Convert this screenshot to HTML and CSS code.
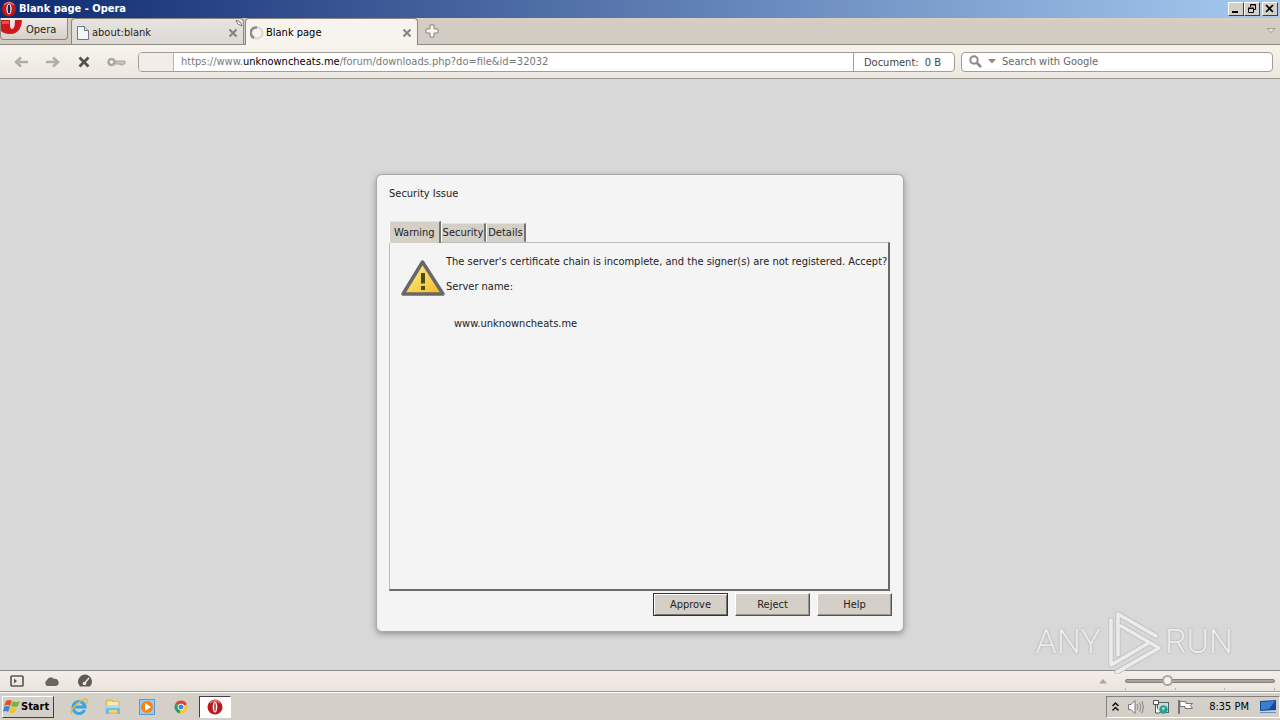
FILE: index.html
```html
<!DOCTYPE html>
<html lang="en">
<head>
<meta charset="utf-8">
<title>Blank page - Opera</title>
<link rel="stylesheet" href="styles.css">
</head>
<body>
<header class="titlebar">
  <svg class="title-icon" width="16" height="16" viewBox="0 0 16 16"><ellipse cx="8" cy="8" rx="7" ry="7.5" fill="#c51418"/><path d="M3 4Q8-1 13 4" fill="none" stroke="#f0746a" stroke-width="1.5"/><ellipse cx="8" cy="8" rx="2.6" ry="5.4" fill="#fff"/><ellipse cx="8" cy="8" rx="1.4" ry="4.5" fill="#17265c"/></svg>
  <h1 class="title">Blank page - Opera</h1>
  <div class="window-buttons">
    <button class="win-btn" aria-label="Minimize"><svg width="12" height="10" viewBox="0 0 12 10"><path d="M2 7h6v2H2z"/></svg></button>
    <button class="win-btn" aria-label="Restore"><svg width="12" height="10" viewBox="0 0 12 10" fill="none" stroke="#000"><path d="M4.500 3V.5h5v5H7.500M4 1h6M2.500 4.500h5v4h-5zM2 4h6"/></svg></button>
    <button class="win-btn win-close" aria-label="Close"><svg width="12" height="10" viewBox="0 0 12 10"><path d="M2 1l7 7M9 1L2 8" stroke="#000" stroke-width="1.7"/></svg></button>
  </div>
</header>

<nav class="tabbar">
  <button class="menu-btn"><svg width="21" height="17" viewBox="0 0 21 17"><path d="M0 2h9v5q0 4 2 4 3 0 3-9h7q-1 14-12 14-6 0-9-3z" fill="#cf171c"/><path d="M1 3h7v3H1z" fill="#e8524e"/></svg><span>Opera</span></button>
  <div class="tab tab-back">
    <svg width="14" height="16" viewBox="0 0 14 16"><path d="M1.500 1.500h7l4 4v9h-11z" fill="#f4f7fa" stroke="#6d7883"/><path d="M8.500 1.500v4h4" fill="#dce3e9" stroke="#6d7883"/></svg>
    <span class="tab-name">about:blank</span>
    <button class="tab-close" aria-label="Close tab"><svg width="10" height="10" viewBox="0 0 10 10"><path d="M1.500 1.500l7 7M8.500 1.500l-7 7" stroke="#85817c" stroke-width="2"/></svg></button>
    <svg class="tab-pin" width="10" height="10" viewBox="0 0 10 10"><path d="M2 1.500Q7 2 8 7 3 6 2 1.500z" fill="#fff" stroke="#77736e"/></svg>
  </div>
  <div class="tab tab-front">
    <svg width="14" height="16" viewBox="0 0 14 16"><circle cx="7" cy="8" r="5.500" fill="none" stroke="#ddd" stroke-width="2.500"/><path d="M4 13A5.500 5.500 0 0 1 7 2.500" fill="none" stroke="#8b8b8b" stroke-width="2.500"/></svg>
    <span class="tab-name">Blank page</span>
    <button class="tab-close" aria-label="Close tab"><svg width="10" height="10" viewBox="0 0 10 10"><path d="M1.500 1.500l7 7M8.500 1.500l-7 7" stroke="#85817c" stroke-width="2"/></svg></button>
  </div>
  <button class="icon-btn new-tab" aria-label="New tab"><svg width="14" height="14" viewBox="0 0 14 14"><path d="M5 1h4v4h4v4H9v4H5V9H1V5h4z" fill="#f8f6f2" stroke="#8a857e"/></svg></button>
  <button class="icon-btn closed-tabs" aria-label="Closed tabs"><svg width="10" height="8" viewBox="0 0 10 8"><path d="M1 1.500h8L5 5.500z" fill="#e8e4dd" stroke="#a29d93"/></svg></button>
</nav>

<form class="toolbar">
  <div class="nav-buttons">
    <button type="button" class="icon-btn" aria-label="Back"><svg width="14" height="12" viewBox="0 0 14 12"><path d="M14 6H3M7 1.500L2 6l5 4.500" fill="none" stroke="#b0aca6" stroke-width="2.500"/></svg></button>
    <button type="button" class="icon-btn" aria-label="Forward"><svg width="14" height="12" viewBox="0 0 14 12"><path d="M0 6h11M7 1.500L12 6l-5 4.500" fill="none" stroke="#b0aca6" stroke-width="2.500"/></svg></button>
    <button type="button" class="icon-btn" aria-label="Stop"><svg width="12" height="12" viewBox="0 0 12 12"><path d="M1.500 1.500l9 9M10.500 1.500l-9 9" stroke="#55524e" stroke-width="2.800"/></svg></button>
    <button type="button" class="icon-btn" aria-label="Log in"><svg width="20" height="10" viewBox="0 0 20 10"><path d="M9 4h10v3h-2v1h-1V7h-1v1h-1V7H9z" fill="#c9c5be" stroke="#aba69f"/><circle cx="5.500" cy="5" r="3" fill="#f4f1ec" stroke="#aba69f" stroke-width="2.500"/></svg></button>
  </div>
  <div class="address">
    <span class="badge"></span>
    <a class="url" href="#">https://www.<b>unknowncheats.me</b>/forum/downloads.php?do=file&amp;id=32032</a>
    <div class="progress"><span>Document:</span><span>0 B</span></div>
  </div>
  <div class="search">
    <svg width="13" height="13" viewBox="0 0 13 13"><circle cx="5" cy="5" r="3.700" fill="none" stroke="#8c8985" stroke-width="2"/><path d="M8 8l4 4" stroke="#8c8985" stroke-width="2.500"/></svg>
    <svg width="8" height="5" viewBox="0 0 8 5"><path d="M0 0h8L4 4.500z" fill="#8c8985"/></svg>
    <input class="search-input" type="text" placeholder="Search with Google" aria-label="Search with Google">
  </div>
</form>

<main class="page">
  <section class="dialog" role="dialog" aria-labelledby="dialog-title">
    <h2 class="dialog-title" id="dialog-title">Security Issue</h2>
    <div class="dialog-tabs" role="tablist">
      <button class="dialog-tab selected" role="tab">Warning</button>
      <button class="dialog-tab" role="tab">Security</button>
      <button class="dialog-tab" role="tab">Details</button>
    </div>
    <div class="panel" role="tabpanel">
      <svg width="46" height="40" viewBox="0 0 46 40"><defs><linearGradient id="yellow" x2="1" y2="1"><stop stop-color="#fff39a"/><stop offset="1" stop-color="#f5b91c"/></linearGradient></defs><path d="M22.500 4L43 36H3z" fill="url(#yellow)" stroke="#67686b" stroke-width="3.500" stroke-linejoin="round"/><path d="M21 15h4v10.500h-4zM21 28h4v4h-4z" fill="#4e4718"/></svg>
      <div class="message">
        <p>The server's certificate chain is incomplete, and the signer(s) are not registered. Accept?</p>
        <p>Server name:</p>
        <p class="server">www.unknowncheats.me</p>
      </div>
    </div>
    <div class="actions">
      <button class="action default">Approve</button>
      <button class="action">Reject</button>
      <button class="action">Help</button>
    </div>
  </section>
  <div class="watermark">
    <span>ANY</span>
    <svg width="60" height="66" viewBox="0 0 60 66" fill="none" stroke-linejoin="round" stroke-linecap="round"><g stroke="#c4c4c4" stroke-width="5.500"><path d="M15 47V6l38 22M18 18l38 22L14 64M8 12V57L44 36"/></g><g stroke="#ececec" stroke-width="3.500"><path d="M15 47V6l38 22M18 18l38 22L14 64M8 12V57L44 36"/></g></svg>
    <span>RUN</span>
  </div>
</main>

<div class="statusbar">
  <div class="status-tools">
    <button class="icon-btn" aria-label="Panels"><svg width="14" height="12" viewBox="0 0 14 12"><rect x="1" y="1" width="12" height="10" rx="1" fill="none" stroke="#5d5a56" stroke-width="1.700"/><path d="M4 3.500l3 2.500-3 2.500z" fill="#5d5a56"/></svg></button>
    <button class="icon-btn" aria-label="Sync"><svg width="16" height="12" viewBox="0 0 16 12"><path d="M4 11a3.500 3.500 0 0 1 0-6 4 4 0 0 1 7-1 3.600 3.600 0 0 1 2 7z" fill="#6a6763"/></svg></button>
    <button class="icon-btn" aria-label="Turbo"><svg width="16" height="14" viewBox="0 0 16 14"><path d="M3 12.500A7 7 0 1 1 13 12.500z" fill="#5d5a56"/><path d="M7 10L12 4" stroke="#eee9e2" stroke-width="1.500"/><circle cx="7.500" cy="9.500" r="1.800" fill="#eee9e2"/></svg></button>
  </div>
  <div class="zoom">
    <svg width="8" height="5" viewBox="0 0 8 5"><path d="M4 0l4 4.500H0z" fill="#aaa59e"/></svg>
    <input class="zoom-range" type="range" min="0" max="100" value="26" aria-label="Zoom">
    <div class="ticks"><i></i><i></i><i></i><i></i></div>
  </div>
</div>

<footer class="taskbar">
  <button class="start"><svg width="18" height="17" viewBox="0 0 18 17"><path d="M3 3q3-2 6 0L7 8Q4 6 1 8z" fill="#e65126"/><path d="M10 3q3 2 7 0l-2 5q-3 2-7 0z" fill="#72b83e"/><path d="M1 9q3-2 6 0l-2 5q-2-2-5 0z" fill="#3c85d3"/><path d="M8 9q3 2 6 0l-2 5q-3 2-6 0z" fill="#f6bd2d"/></svg><span>Start</span></button>
  <div class="launchers">
    <button class="launcher" aria-label="Internet Explorer"><svg width="18" height="18" viewBox="0 0 18 18"><path d="M14.500 12A6 6 0 1 1 15 9H5" fill="none" stroke="#39a5e5" stroke-width="3"/><path d="M2 16Q-1 13 7 6q8-7 10-4 1 1-1 4" fill="none" stroke="#e8bb38" stroke-width="1.500"/></svg></button>
    <button class="launcher" aria-label="Explorer"><svg width="18" height="18" viewBox="0 0 18 18"><path d="M2 2h6l1 2h6v11H2z" fill="#f1d572" stroke="#d5b65a"/><path d="M4 4h10v3H4z" fill="#f9edae"/><path d="M2 8h14v8h-3v-4H5v4H2z" fill="#70bce5"/><path d="M2 8h14v2H2z" fill="#a8dbf3"/></svg></button>
    <button class="launcher" aria-label="Media Player"><svg width="18" height="18" viewBox="0 0 18 18"><rect x="1.500" y="1.500" width="15" height="15" fill="#9bc9ef" stroke="#5a99d1"/><circle cx="9" cy="9" r="6" fill="#f28515"/><path d="M7 5l6 4-6 4z" fill="#fff"/></svg></button>
    <button class="launcher" aria-label="Chrome"><svg width="18" height="18" viewBox="0 0 18 18"><path d="M9 9L3.400 5.800A6.500 6.500 0 0 1 15 6.500z" fill="#dc4437"/><path d="M9 9L3.400 5.800A6.500 6.500 0 0 0 8 15.500z" fill="#25a35a"/><path d="M9 9l6-2.500A6.500 6.500 0 0 1 8 15.500z" fill="#f9c837"/><circle cx="9" cy="9" r="3.300" fill="#fff"/><circle cx="9" cy="9" r="2.500" fill="#4285e8"/></svg></button>
    <button class="launcher running" aria-label="Opera"><svg width="18" height="18" viewBox="0 0 18 18"><ellipse cx="9" cy="9" rx="7.500" ry="7.500" fill="#bd171a"/><path d="M4 5q5-5 10 0" fill="none" stroke="#e8807a" stroke-width="1.500"/><ellipse cx="9" cy="9" rx="2.300" ry="5.500" fill="#fff"/><ellipse cx="9" cy="9" rx=".8" ry="4.500" fill="#aa3330"/></svg></button>
  </div>
  <div class="tray">
    <svg width="9" height="12" viewBox="0 0 9 12"><path d="M1.500 5l3-3 3 3M1.500 9.500l3-3 3 3" fill="none" stroke="#111" stroke-width="1.500"/></svg>
    <svg width="18" height="16" viewBox="0 0 18 16"><path d="M1.500 5.500H4l4-4v13l-4-4H1.500z" fill="#fff" stroke="#777"/><path d="M10 5q2 3 0 6M12.500 3.500q3 4.500 0 9M15 2q3 6 0 12" fill="none" stroke="#858585"/></svg>
    <svg width="18" height="16" viewBox="0 0 18 16"><rect x="5.500" y="3.500" width="11" height="10" fill="#c7dfe4" stroke="#4c666b"/><path d="M1.500 1.500h5v4h-5zM3.500 6v8h4" fill="#fff" stroke="#555"/><circle cx="11.500" cy="10.500" r="4.200" fill="#299e91"/><path d="M10 9q2-2 3 0l-2 3z" fill="#a9dec0"/></svg>
    <svg width="18" height="16" viewBox="0 0 18 16"><path d="M3 2.500h6v2h6.500l-2 2 2 3H8v-2H3z" fill="#fff" stroke="#777"/><path d="M2 1v14" stroke="#777" stroke-width="2"/></svg>
    <time class="clock">8:35 PM</time>
    <svg width="16" height="14" viewBox="0 0 16 14"><path d="M0 1l16-1v10L0 11z" fill="#174a9c"/><path d="M1 2l14-1-6 8-8 1z" fill="#397ed0"/><path d="M0 12h16v1H0z" fill="#6c90b6"/></svg>
  </div>
</footer>
</body>
</html>
```
FILE: styles.css
```css
* { box-sizing: border-box; }
body {
  margin: 0;
  min-height: 100vh;
  display: flex;
  flex-direction: column;
  background: #d8d8d8;
  color: #222;
  font: 11px/14px Tahoma, "DejaVu Sans Condensed", "Noto Sans", sans-serif;
}
button, input { font: inherit; color: inherit; }
button { padding: 0; }
svg { flex: none; display: block; }
h1, h2, p { margin: 0; font-size: inherit; font-weight: normal; }

.titlebar {
  height: 18px;
  display: flex;
  align-items: center;
  gap: 2px;
  padding: 0 2px 0 1px;
  background: linear-gradient(90deg, #0e2a70, #a6caf0);
}
.title { flex: 1; color: #fff; font-weight: bold; }
.window-buttons { display: flex; }
.win-btn {
  width: 16px;
  height: 14px;
  display: grid;
  place-items: center;
  border: 1px solid;
  border-color: #fff #404040 #404040 #fff;
  background: #d4d0c8;
}
.win-close { margin-left: 2px; }

.tabbar {
  height: 27px;
  display: flex;
  align-items: flex-end;
  background: linear-gradient(#dccdc0, #d3ccc3 6px, #d3ccc3);
  border-bottom: 1px solid #8d8a84;
}
.menu-btn {
  width: 68px;
  height: 22px;
  margin-right: 3px;
  align-self: flex-start;
  display: flex;
  gap: 4px;
  border: 1px solid #8b8680;
  border-top: 0;
  border-radius: 0 0 4px 4px;
  background: linear-gradient(#eeeae6, #d6d0c9);
}
.menu-btn span { padding-top: 5px; }
.icon-btn {
  display: grid;
  place-items: center;
  border: 0;
  background: none;
}
.tab {
  position: relative;
  width: 173px;
  height: 26px;
  display: flex;
  align-items: center;
  gap: 2px;
  padding: 2px 5px 0 4px;
  border: 1px solid #8b8680;
  border-bottom: 0;
  border-radius: 4px 4px 0 0;
}
.tab-back { background: linear-gradient(#e7e3df, #dcd8d3); }
.tab-front { height: 27px; margin: 0 0 -1px 1px; background: #f7f4ee; color: #000; }
.tab-name { flex: 1; }
.tab-close { border: 0; background: none; }
.tab-pin { position: absolute; top: 0; right: -1px; }
.new-tab { width: 28px; height: 26px; }
.closed-tabs { height: 26px; margin-left: auto; padding-right: 4px; }

.toolbar {
  height: 34px;
  display: flex;
  align-items: center;
  gap: 6px;
  padding: 0 7px 0 5px;
  background: linear-gradient(#f7f4ee, #ece7e0);
  border-bottom: 1px solid #99958f;
}
.nav-buttons { width: 127px; display: flex; }
.nav-buttons .icon-btn { width: 32px; height: 24px; flex: 1; }
.address, .search {
  height: 20px;
  display: flex;
  align-items: center;
  background: #fff;
  border: 1px solid #a19d97;
  border-radius: 4px;
  overflow: hidden;
}
.address { flex: 815; }
.search { flex: 303; gap: 6px; padding-left: 7px; }
.badge {
  width: 35px;
  align-self: stretch;
  background: #f2ede8;
  border-right: 1px solid #b9b5af;
}
.url { flex: 1; padding-left: 7px; color: #777; text-decoration: none; }
.url b { color: #000; font-weight: normal; }
.progress {
  width: 101px;
  align-self: stretch;
  display: flex;
  align-items: center;
  justify-content: space-between;
  padding: 2px 13px 0 10px;
  border-left: 1px solid #a19d97;
  color: #444;
}
.search-input { flex: 1; min-width: 0; padding: 0; border: 0; outline: 0; background: none; }
.search-input::placeholder { color: #666; opacity: 1; }

.page {
  flex: 1;
  position: relative;
  display: flex;
  justify-content: center;
  align-items: flex-start;
  padding: 95px 16px 32px;
}
.dialog {
  width: 100%;
  max-width: 528px;
  padding: 12px 11px 15px 12px;
  background: #f4f4f4;
  border: 1px solid #a9a9a9;
  border-radius: 6px;
  box-shadow: 0 2px 6px #0005;
}
.dialog-title { margin-bottom: 20px; }
.dialog-tabs { display: flex; align-items: flex-end; }
.dialog-tab {
  height: 19px;
  padding: 1px 1px 0;
  background: #d4d0c8;
  border: 1px solid;
  border-color: #e4e2de #77736e transparent #fff;
  border-right-width: 2px;
}
.dialog-tab.selected {
  position: relative;
  height: 22px;
  margin-bottom: -1px;
  padding: 1px 4px 0;
  border-bottom: 0;
}
.panel {
  width: 501px;
  max-width: 100%;
  min-height: 349px;
  display: flex;
  align-items: flex-start;
  padding: 12px 0 8px 10px;
  border: 1px solid #bbb;
  border-right: 2px solid #696969;
  border-bottom: 2px solid #696969;
}
.panel svg { margin-top: 3px; }
.message { display: flex; flex-direction: column; gap: 11px; white-space: nowrap; }
.server { padding: 12px 0 0 8px; }
.actions { display: flex; justify-content: flex-end; gap: 7px; margin-top: 2px; }
.action {
  width: 75px;
  height: 23px;
  background: #d4d0c8;
  border: 1px solid;
  border-color: #fff #555 #555 #fff;
  box-shadow: inset -1px -1px #999590;
}
.action.default { border-color: #333; box-shadow: inset 1px 1px #fff, inset -1px -1px #77736e; }
.watermark {
  position: absolute;
  right: 47px;
  bottom: -4px;
  display: flex;
  align-items: center;
  gap: 2px;
  color: #ececec;
  font: 300 34px/66px Roboto, "Open Sans", sans-serif;
  text-shadow: 0 0 2px #999;
}

.statusbar {
  height: 22px;
  display: flex;
  justify-content: space-between;
  align-items: center;
  padding: 0 5px 0 0;
  background: linear-gradient(#f5eee8, #e9e4dc);
  border-top: 1px solid #8d8a88;
  border-bottom: 1px solid #99958f;
}
.status-tools { display: flex; }
.status-tools .icon-btn { width: 34px; height: 20px; }
.zoom {
  display: grid;
  grid-template-columns: 8px 150px;
  column-gap: 18px;
  align-items: center;
  padding-top: 2px;
}
.zoom-range { width: 150px; height: 14px; margin: 0; appearance: none; background: none; }
.zoom-range::-webkit-slider-runnable-track {
  height: 4px;
  border: 1px solid #837f7a;
  border-radius: 2px;
  background: #aaa59e;
}
.zoom-range::-webkit-slider-thumb {
  appearance: none;
  width: 11px;
  height: 11px;
  margin-top: -5px;
  border: 2px solid #aaa7a3;
  border-radius: 50%;
  background: #f7f4f0;
}
.ticks { grid-column: 2; display: flex; justify-content: space-between; }
.ticks i { width: 1px; height: 2px; background: #b5b0aa; }

.taskbar {
  height: 28px;
  display: flex;
  align-items: center;
  padding-left: 2px;
  background: #d4d0c8;
  border-top: 1px solid #fff;
}
.start {
  width: 52px;
  height: 22px;
  display: flex;
  align-items: center;
  border: 1px solid;
  border-color: #fff #404040 #404040 #fff;
  background: #d4d0c8;
  color: #000;
  font-weight: bold;
}
.launchers { display: flex; flex: 1; gap: 2px; padding-left: 9px; }
.launcher {
  width: 32px;
  height: 22px;
  display: grid;
  place-items: center;
  border: 0;
  background: none;
}
.running { border: 1px solid; border-color: #404040 #fff #fff #404040; background: #fff; }
.tray {
  height: 22px;
  display: flex;
  align-items: center;
  gap: 7px;
  padding: 0 3px 0 4px;
  border: 1px solid;
  border-color: #808080 #fff #fff #808080;
  color: #000;
}
.clock { padding: 0 4px 0 7px; }
```
